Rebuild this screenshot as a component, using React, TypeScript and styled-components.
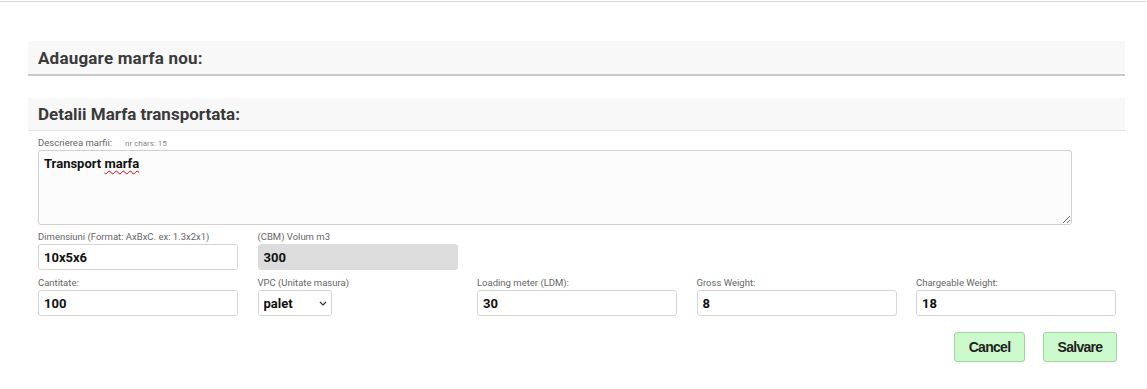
import React from "react";
import styled, { createGlobalStyle } from "styled-components";

const Global = createGlobalStyle`
  html, body { margin: 0; padding: 0; background: #fff; }
  body { font-family: Roboto, "Noto Sans", sans-serif; color: #333; }
  * { box-sizing: border-box; }
`;

const Page = styled.div`
  width: 1147px;
  height: 389px;
  border-top: 1px solid #fff;
  overflow: hidden;
`;

const TopRule = styled.div`
  height: 1px;
  background: #d9d9d9;
`;

const Container = styled.div`
  margin: 39px 22px 0 28px;
  display: flex;
  flex-direction: column;
`;

const SectionHeader = styled.div<{ $strong?: boolean; $gap?: number }>`
  height: ${(p) => (p.$strong ? 35 : 33)}px;
  margin-top: ${(p) => p.$gap ?? 0}px;
  background: #f8f8f8;
  border-bottom: ${(p) => (p.$strong ? "2px solid #c9c9c9" : "1px solid #e3e3e3")};
  display: flex;
  align-items: center;
  padding-left: 10px;
  font-weight: 700;
  font-size: 17px;
  letter-spacing: ${(p) => (p.$strong ? 0.2 : 0)}px;
  color: #3a3a3a;
`;

const Form = styled.div`
  padding-left: 10px;
  display: flex;
  flex-direction: column;
`;

const LabelRow = styled.div`
  display: flex;
  align-items: baseline;
  height: 20px;
  padding-top: 5px;
`;

const Label = styled.label`
  font-size: 9.5px;
  color: #666;
  display: block;
  height: 14px;
  line-height: 14px;
`;

const Hint = styled.span`
  font-size: 8px;
  color: #888;
  margin-left: 13px;
`;

const AreaWrap = styled.div`
  position: relative;
  width: 1034px;
  height: 75px;
  margin-top: -1px;
`;

const TextArea = styled.textarea`
  width: 100%;
  height: 100%;
  border: 1px solid #d0d0d0;
  border-radius: 3px;
  background: #fcfcfc;
  font-family: inherit;
  font-weight: 700;
  font-size: 13px;
  color: #111;
  padding: 5px 5px;
  resize: both;
  outline: none;
  display: block;
`;

const Squiggle = styled.div`
  position: absolute;
  left: 6px;
  top: 6px;
  font-weight: 700;
  font-size: 13px;
  line-height: normal;
  color: transparent;
  pointer-events: none;
  white-space: pre;
`;

const Misspelled = styled.span`
  text-decoration: underline wavy #d00;
  text-decoration-thickness: 1px;
  text-underline-offset: 2px;
`;

const Grid = styled.div`
  display: grid;
  grid-template-columns: repeat(5, 200px);
  column-gap: 19.5px;
  margin-top: 5px;
`;

const Field = styled.div`
  display: flex;
  flex-direction: column;
  margin-bottom: 6px;
`;

const Input = styled.input<{ $disabled?: boolean }>`
  width: 200px;
  height: 26px;
  border: 1px solid ${(p) => (p.$disabled ? "#dcdcdc" : "#d6d6d6")};
  border-radius: 3px;
  background: ${(p) => (p.$disabled ? "#dcdcdc" : "#fff")};
  font-family: inherit;
  font-weight: 700;
  font-size: 13px;
  color: #111;
  padding: 0 5px;
  outline: none;
`;

const SelectWrap = styled.div`
  position: relative;
  width: 74px;
  height: 26px;
`;

const Select = styled.select`
  appearance: none;
  -webkit-appearance: none;
  width: 100%;
  height: 100%;
  border: 1px solid #d6d6d6;
  border-radius: 3px;
  background: #fff;
  font-family: inherit;
  font-weight: 700;
  font-size: 13px;
  color: #111;
  padding: 0 5px;
  outline: none;
`;

const Chevron = styled.svg`
  position: absolute;
  right: 5px;
  top: 11px;
  width: 8px;
  height: 5px;
  pointer-events: none;
`;

const Actions = styled.div`
  display: flex;
  justify-content: flex-end;
  gap: 18px;
  width: 1079px;
  margin-top: 10px;
`;

const Button = styled.button<{ $w: number }>`
  width: ${(p) => p.$w}px;
  height: 30px;
  background: #ccf9cc;
  border: 1px solid #9fd49f;
  border-radius: 3px;
  font-family: "Liberation Sans", Arial, sans-serif;
  font-weight: 700;
  font-size: 14px;
  letter-spacing: -0.7px;
  color: #222;
  padding: 0;
`;

export default function App() {
  return (
    <Page>
      <Global />
      <TopRule />
      <Container>
        <SectionHeader $strong>Adaugare marfa nou:</SectionHeader>
        <SectionHeader $gap={22}>Detalii Marfa transportata:</SectionHeader>
        <Form>
          <LabelRow>
            <Label>Descrierea marfii:</Label>
            <Hint>nr chars: 15</Hint>
          </LabelRow>
          <AreaWrap>
            <TextArea defaultValue="Transport marfa" spellCheck={false} />
            <Squiggle>
              {"Transport "}
              <Misspelled>marfa</Misspelled>
            </Squiggle>
          </AreaWrap>
          <Grid>
            <Field>
              <Label>Dimensiuni (Format: AxBxC. ex: 1.3x2x1)</Label>
              <Input defaultValue="10x5x6" />
            </Field>
            <Field>
              <Label>(CBM) Volum m3</Label>
              <Input $disabled defaultValue="300" readOnly />
            </Field>
            <div />
            <div />
            <div />
            <Field>
              <Label>Cantitate:</Label>
              <Input defaultValue="100" />
            </Field>
            <Field>
              <Label>VPC (Unitate masura)</Label>
              <SelectWrap>
                <Select defaultValue="palet">
                  <option value="palet">palet</option>
                  <option value="colet">colet</option>
                </Select>
                <Chevron viewBox="0 0 8 5">
                  <path d="M1 1l3 3 3-3" fill="none" stroke="#333" strokeWidth="1.2" />
                </Chevron>
              </SelectWrap>
            </Field>
            <Field>
              <Label>Loading meter (LDM):</Label>
              <Input defaultValue="30" />
            </Field>
            <Field>
              <Label>Gross Weight:</Label>
              <Input defaultValue="8" />
            </Field>
            <Field>
              <Label>Chargeable Weight:</Label>
              <Input defaultValue="18" />
            </Field>
          </Grid>
          <Actions>
            <Button $w={71}>Cancel</Button>
            <Button $w={74}>Salvare</Button>
          </Actions>
        </Form>
      </Container>
    </Page>
  );
}
